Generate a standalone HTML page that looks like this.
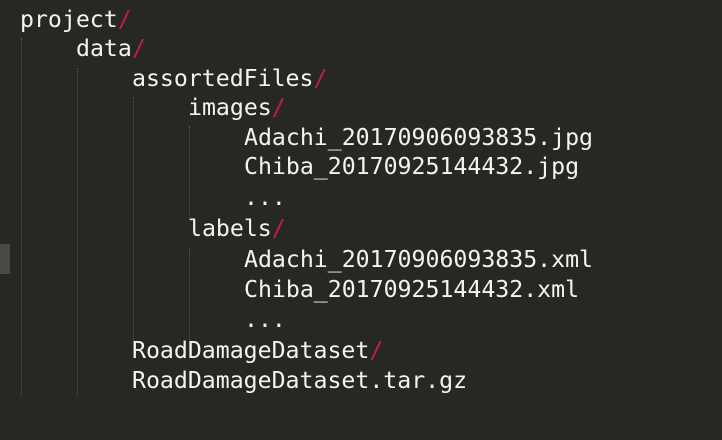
<!DOCTYPE html>
<html><head><meta charset="utf-8"><style>
html,body{margin:0;padding:0;background:#272822;width:722px;height:440px;overflow:hidden;position:relative}
.l{position:absolute;font-family:"DejaVu Sans Mono","Liberation Mono",monospace;font-size:23.2px;line-height:30px;color:#f4f4ee;white-space:pre;letter-spacing:0}
.s{color:#c2185b}
.g{position:absolute;width:0;border-left:1px dotted #55554e}
</style></head><body>
<div style="position:absolute;left:0;top:244px;width:10px;height:30px;background:#4a4a44"></div>
<div class="g" style="left:21px;top:38px;height:358px"></div>
<div class="g" style="left:77px;top:68px;height:328px"></div>
<div class="g" style="left:133px;top:97px;height:244px"></div>
<div class="g" style="left:189px;top:126px;height:94px"></div>
<div class="g" style="left:189px;top:248px;height:92px"></div>
<div class="l" style="left:20px;top:5px">project<span class="s">/</span></div>
<div class="l" style="left:76px;top:34px">data<span class="s">/</span></div>
<div class="l" style="left:132px;top:64px">assortedFiles<span class="s">/</span></div>
<div class="l" style="left:188px;top:93px">images<span class="s">/</span></div>
<div class="l" style="left:244px;top:123px">Adachi_20170906093835.jpg</div>
<div class="l" style="left:244px;top:152px">Chiba_20170925144432.jpg</div>
<div class="l" style="left:244px;top:183px">...</div>
<div class="l" style="left:188px;top:214px">labels<span class="s">/</span></div>
<div class="l" style="left:244px;top:245px">Adachi_20170906093835.xml</div>
<div class="l" style="left:244px;top:275px">Chiba_20170925144432.xml</div>
<div class="l" style="left:244px;top:305px">...</div>
<div class="l" style="left:132px;top:336px">RoadDamageDataset<span class="s">/</span></div>
<div class="l" style="left:132px;top:366px">RoadDamageDataset.tar.gz</div>
</body></html>
